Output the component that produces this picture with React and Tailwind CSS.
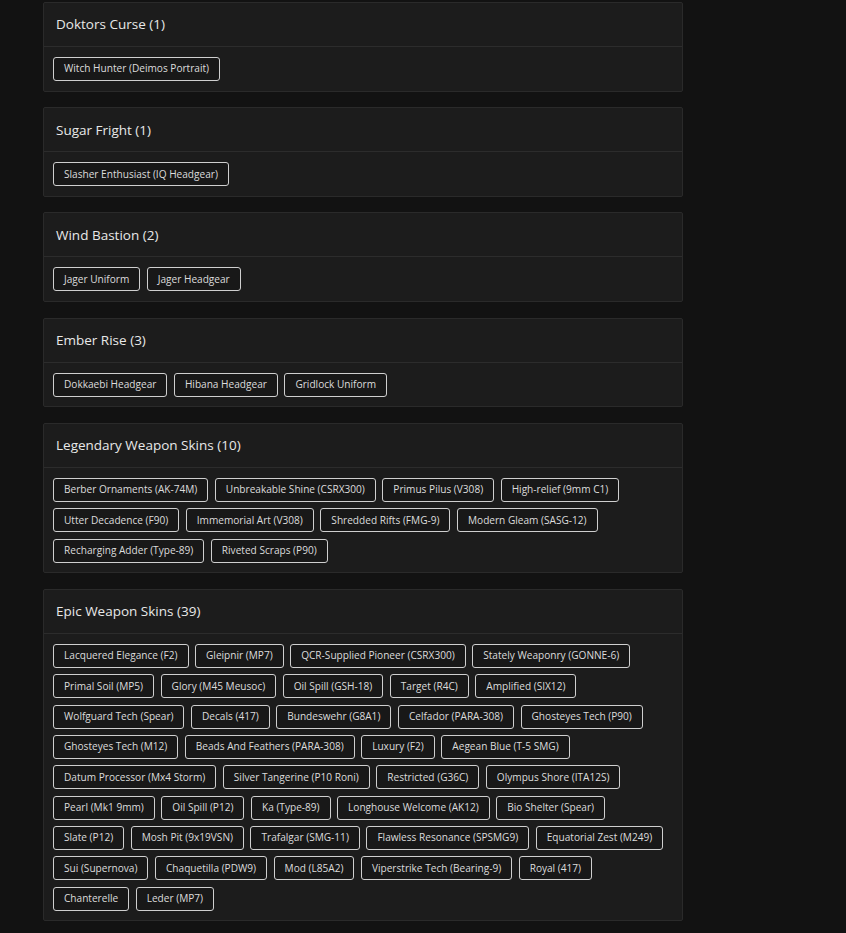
const sections = [
  { title: 'Doktors Curse', items: ['Witch Hunter (Deimos Portrait)'] },
  { title: 'Sugar Fright', items: ['Slasher Enthusiast (IQ Headgear)'] },
  { title: 'Wind Bastion', items: ['Jager Uniform', 'Jager Headgear'] },
  { title: 'Ember Rise', items: ['Dokkaebi Headgear', 'Hibana Headgear', 'Gridlock Uniform'] },
  {
    title: 'Legendary Weapon Skins',
    items: [
      'Berber Ornaments (AK-74M)', 'Unbreakable Shine (CSRX300)', 'Primus Pilus (V308)', 'High-relief (9mm C1)',
      'Utter Decadence (F90)', 'Immemorial Art (V308)', 'Shredded Rifts (FMG-9)', 'Modern Gleam (SASG-12)',
      'Recharging Adder (Type-89)', 'Riveted Scraps (P90)',
    ],
  },
  {
    title: 'Epic Weapon Skins',
    items: [
      'Lacquered Elegance (F2)', 'Gleipnir (MP7)', 'QCR-Supplied Pioneer (CSRX300)', 'Stately Weaponry (GONNE-6)',
      'Primal Soil (MP5)', 'Glory (M45 Meusoc)', 'Oil Spill (GSH-18)', 'Target (R4C)', 'Amplified (SIX12)',
      'Wolfguard Tech (Spear)', 'Decals (417)', 'Bundeswehr (G8A1)', 'Celfador (PARA-308)', 'Ghosteyes Tech (P90)',
      'Ghosteyes Tech (M12)', 'Beads And Feathers (PARA-308)', 'Luxury (F2)', 'Aegean Blue (T-5 SMG)',
      'Datum Processor (Mx4 Storm)', 'Silver Tangerine (P10 Roni)', 'Restricted (G36C)', 'Olympus Shore (ITA12S)',
      'Pearl (Mk1 9mm)', 'Oil Spill (P12)', 'Ka (Type-89)', 'Longhouse Welcome (AK12)', 'Bio Shelter (Spear)',
      'Slate (P12)', 'Mosh Pit (9x19VSN)', 'Trafalgar (SMG-11)', 'Flawless Resonance (SPSMG9)', 'Equatorial Zest (M249)',
      'Sui (Supernova)', 'Chaquetilla (PDW9)', 'Mod (L85A2)', 'Viperstrike Tech (Bearing-9)', 'Royal (417)',
      'Chanterelle', 'Leder (MP7)',
    ],
  },
]

const Section = ({ title, items }) => (
  <div className="bg-[#1c1c1c] border border-[#2a2a2a] rounded-[2px]">
    <div className="h-[44px] px-3 flex items-center border-b border-[#2c2c2c]">
      <h2 className="text-[13.5px] font-medium text-[#e8e8e8]">
        {title} ({items.length})
      </h2>
    </div>
    <div className="px-[9px] pt-[10px] pb-[9.5px] flex flex-wrap gap-x-[6.5px] gap-y-[6.4px]">
      {items.map((item, i) => (
        <span
          key={i}
          className="h-[24px] px-[10px] flex items-center border border-[#cfcfcf] rounded-[3px] bg-[#181818] text-[10.1px] text-[#dcdcdc] whitespace-nowrap"
        >
          {item}
        </span>
      ))}
    </div>
  </div>
)

export default function App() {
  return (
    <div
      className="min-h-[933px] bg-[#121212] pt-[2px] pl-[43px]"
      style={{ fontFamily: '"Open Sans", "Noto Sans", sans-serif' }}
    >
      <div className="w-[640px] flex flex-col gap-[15.7px]">
        {sections.map(s => (
          <Section key={s.title} {...s} />
        ))}
      </div>
    </div>
  )
}
